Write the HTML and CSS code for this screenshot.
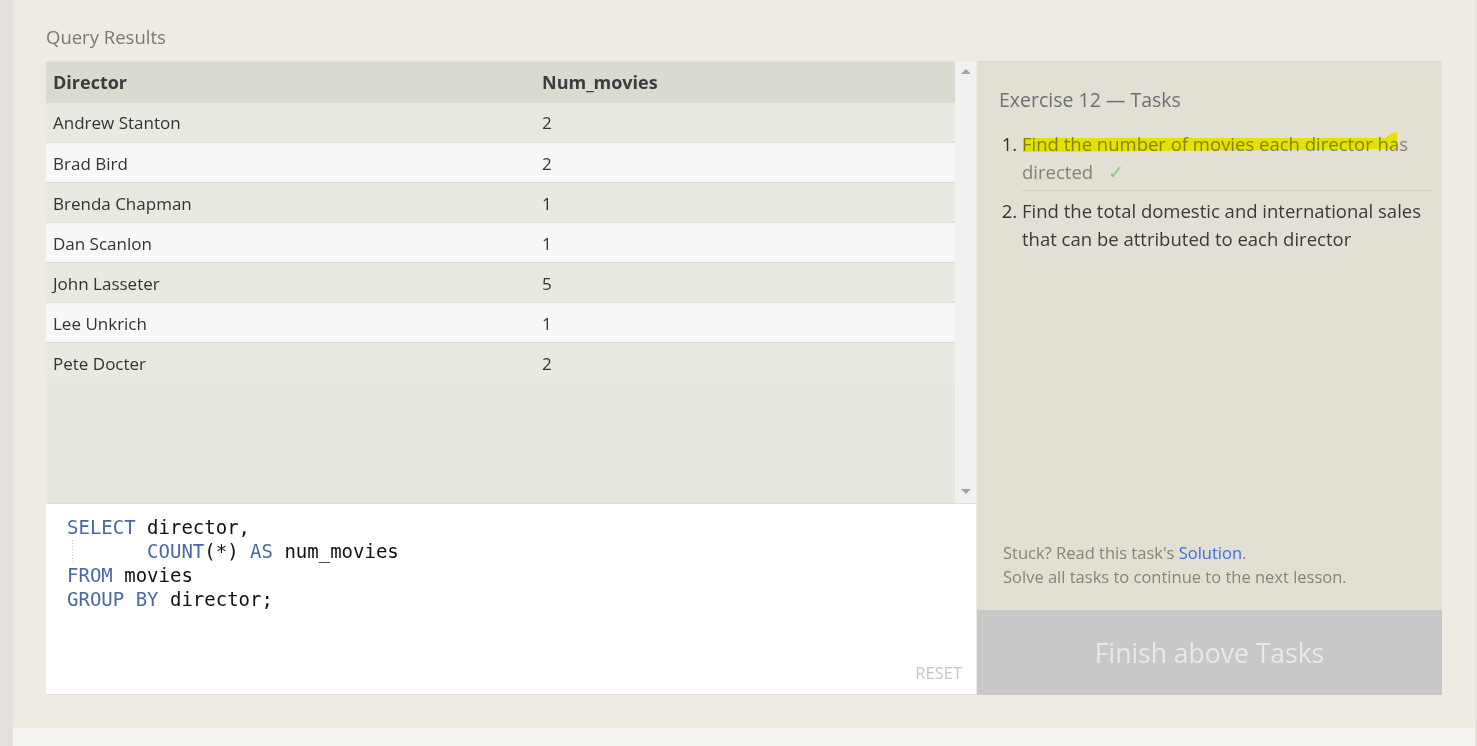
FILE: index.html
```html
<!DOCTYPE html>
<html lang="en">
<head>
<meta charset="utf-8">
<title>Query Results</title>
<link rel="stylesheet" href="styles.css">
</head>
<body>
<div class="edge"></div>
<div class="main">
  <section class="panel">
    <h2 class="title">Query Results</h2>
    <div class="workspace">
      <div class="left">
        <div class="results">
          <div class="table-wrap">
            <table class="grid">
              <thead>
                <tr><th class="c1">Director</th><th>Num_movies</th></tr>
              </thead>
              <tbody>
                <tr><td>Andrew Stanton</td><td>2</td></tr>
                <tr><td>Brad Bird</td><td>2</td></tr>
                <tr><td>Brenda Chapman</td><td>1</td></tr>
                <tr><td>Dan Scanlon</td><td>1</td></tr>
                <tr><td>John Lasseter</td><td>5</td></tr>
                <tr><td>Lee Unkrich</td><td>1</td></tr>
                <tr><td>Pete Docter</td><td>2</td></tr>
              </tbody>
            </table>
          </div>
          <div class="scrollbar">
            <span class="arrow up"></span>
            <span class="arrow down"></span>
          </div>
        </div>
        <div class="editor">
<pre class="code"><span class="kw">SELECT</span> director,
<span class="indent">       </span><span class="kw">COUNT</span>(*) <span class="kw">AS</span> num_movies
<span class="kw">FROM</span> movies
<span class="kw">GROUP BY</span> director;</pre>
          <div class="reset-row"><span class="reset">RESET</span></div>
        </div>
      </div>
      <div class="right">
        <div class="tasks">
          <h3 class="tasks-title">Exercise 12 — Tasks</h3>
          <ol class="task-list">
            <li class="task done">
              <span class="hl-wrap"><svg class="marker" width="376" height="22" viewBox="0 0 376 22"><polygon points="0,6 362,6 369,1 374,0 374,17 0,20" fill="#e3e300"/></svg><span class="task-text">Find the number of movies each director has directed</span></span><span class="check">✓</span>
            </li>
            <li class="task">Find the total domestic and international sales that can be attributed to each director</li>
          </ol>
          <div class="spacer"></div>
          <p class="help">Stuck? Read this task's <a class="link" href="#">Solution</a>.<br>Solve all tasks to continue to the next lesson.</p>
        </div>
        <div class="finish">Finish above Tasks</div>
      </div>
    </div>
  </section>
  <div class="below"></div>
</div>
<div class="edge thin"></div>
</body>
</html>
```

FILE: styles.css
```css
* { box-sizing: border-box; }

html, body {
  margin: 0;
  height: 100%;
}

body {
  display: flex;
  background: #f5f4f0;
  font-family: "Open Sans", "Noto Sans", sans-serif;
  overflow: hidden;
}

.edge {
  width: 13px;
  flex: none;
  background: #e4e0dc;
}

.edge.thin {
  width: 2px;
}

.main {
  flex: 1;
  display: flex;
  flex-direction: column;
}

.panel {
  height: 728px;
  background: #eeebe3;
  padding: 0 33px 33px;
  display: flex;
  flex-direction: column;
  border-bottom-left-radius: 3px;
  border-bottom-right-radius: 3px;
}

.below {
  flex: 1;
  background: #f5f4f0;
}

.title {
  margin: 0;
  height: 61px;
  padding-top: 24px;
  font-size: 18.5px;
  font-weight: 400;
  line-height: 26px;
  color: #7a7977;
}

.workspace {
  flex: 1;
  display: flex;
}

.left {
  width: 930px;
  display: flex;
  flex-direction: column;
}

.results {
  height: 443px;
  display: flex;
  background: #e8e7df;
  border-bottom: 1px solid #dedcd4;
}

.table-wrap {
  width: 909px;
}

.grid {
  width: 100%;
  border-collapse: collapse;
  font-size: 17px;
  color: #333;
}

.grid th {
  background: #dbdad0;
  height: 41px;
  text-align: left;
  font-weight: 700;
  font-size: 18px;
  color: #3c3c3c;
  padding: 0 7px;
  border-top: 1px solid #e3e2da;
}

.grid th.c1 {
  width: 489px;
}

.grid td {
  height: 40px;
  padding: 2px 7px 0;
  border-bottom: 1px solid #dddcd6;
  line-height: 20px;
}

.grid tbody tr:nth-child(odd) td {
  background: #e9e8e1;
}

.grid tbody tr:nth-child(even) td {
  background: #f8f8f8;
}

.grid tbody tr:last-child td {
  border-bottom: none;
}

.scrollbar {
  width: 21px;
  background: #f1f1f1;
  display: flex;
  flex-direction: column;
  justify-content: space-between;
  align-items: center;
  padding: 8px 0 9px;
}

.arrow {
  width: 0;
  height: 0;
  border-left: 5px solid transparent;
  border-right: 5px solid transparent;
}

.arrow.up {
  border-bottom: 5px solid #a3a3a3;
}

.arrow.down {
  border-top: 5px solid #a3a3a3;
}

.editor {
  flex: 1;
  background: #fff;
  border-bottom: 1px solid #e2e1da;
  display: flex;
  flex-direction: column;
  padding: 11px 14px 11px 21px;
}

.code {
  margin: 0;
  font-family: "DejaVu Sans Mono", "Liberation Mono", monospace;
  font-size: 19px;
  line-height: 24px;
  color: #111;
  flex: 1;
}

.kw {
  color: #4a68a8;
}

.indent {
  background-image: repeating-linear-gradient(to bottom, #c9c9c9 0 1px, transparent 1px 3px);
  background-size: 1px 100%;
  background-position: 5px 0;
  background-repeat: no-repeat;
}

.reset-row {
  display: flex;
  justify-content: flex-end;
}

.reset {
  font-size: 16.5px;
  line-height: 20px;
  color: #c6c6c6;
}

.right {
  width: 465px;
  margin-left: 1px;
  display: flex;
  flex-direction: column;
}

.tasks {
  flex: 1;
  background: #e2dfd4;
  border-top: 1px solid #dcdccf;
  display: flex;
  flex-direction: column;
  padding: 25px 10px 21px 22px;
}

.tasks-title {
  margin: 0 0 17px;
  font-size: 19.5px;
  font-weight: 400;
  line-height: 26px;
  color: #6d6f76;
}

.task-list {
  margin: 0;
  padding: 0 0 0 23px;
  font-size: 18.5px;
  line-height: 28px;
  color: #3a3a3a;
}

.task {
  padding: 0 0 6px;
}

.task.done {
  color: #939391;
  border-bottom: 1px solid #d3d1c6;
  margin-bottom: 6px;
  padding-bottom: 4px;
}

.task::marker {
  color: #333;
}

.hl-wrap {
  position: relative;
}

.marker {
  position: absolute;
  left: 1px;
  top: 1px;
  z-index: 0;
}

.task-text {
  position: relative;
  z-index: 1;
  mix-blend-mode: multiply;
}

.check {
  display: inline-block;
  margin-left: 15px;
  color: #86cc88;
}

.spacer {
  flex: 1;
}

.help {
  margin: 0;
  padding-left: 4px;
  font-size: 16.5px;
  line-height: 24px;
  color: #8a8478;
}

.link {
  color: #3c6ee0;
  text-decoration: none;
}

.finish {
  height: 85px;
  background: #c8c8c8;
  display: flex;
  align-items: center;
  justify-content: center;
  font-size: 26.5px;
  color: #e9e9e9;
}
```
